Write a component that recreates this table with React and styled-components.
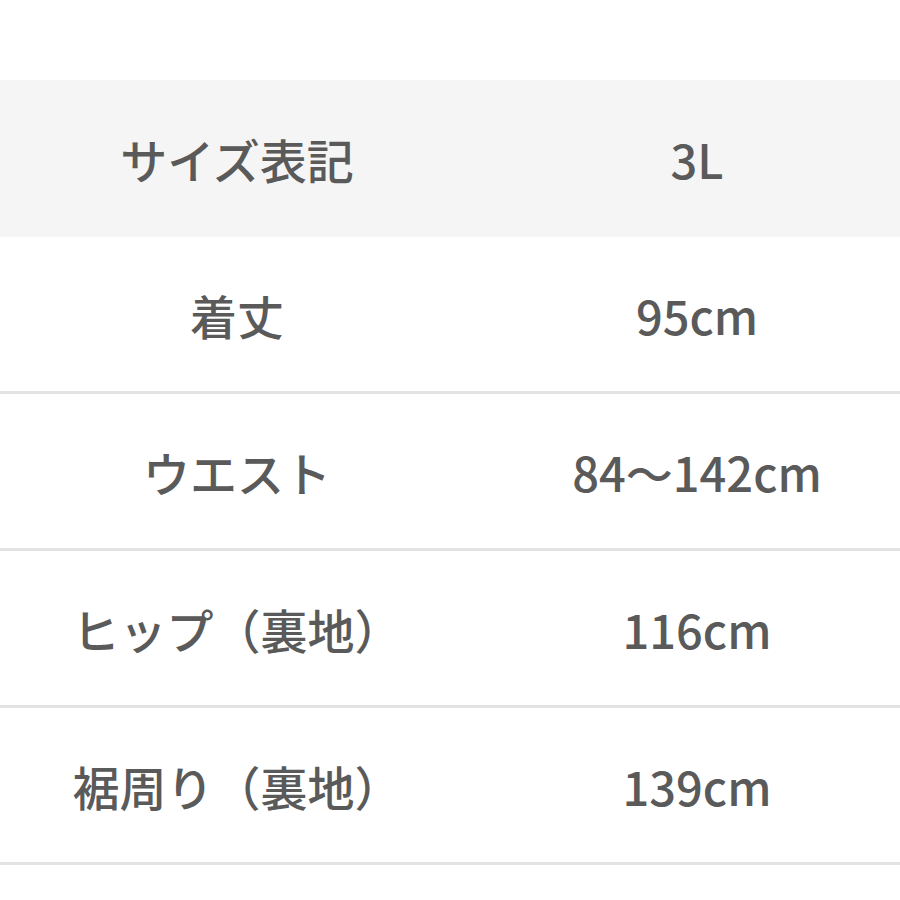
import React from 'react'
import styled, { createGlobalStyle } from 'styled-components'

const rows = [
    ['着丈', '95cm'],
    ['ウエスト', '84〜142cm'],
    ['ヒップ（裏地）', '116cm'],
    ['裾周り（裏地）', '139cm'],
]

function App() {
    return (
        <>
            <Global />
            <Page>
                <Table>
                    <Row head>
                        <Cell>サイズ表記</Cell>
                        <Cell>3L</Cell>
                    </Row>
                    {rows.map(([label, value]) =>
                        <Row key={label}>
                            <Cell>{label}</Cell>
                            <Cell>{value}</Cell>
                        </Row>
                    )}
                </Table>
            </Page>
        </>
    )
}

const Global = createGlobalStyle`
    html, body {
        margin: 0;
        padding: 0;
        background: #ffffff;
        overflow: hidden;
    }
`;

const Page = styled.div`
    width: 900px;
    height: 900px;
    overflow: hidden;
    padding-top: 80px;
    box-sizing: border-box;
`;

const Table = styled.div`
    width: 920px;
    display: flex;
    flex-direction: column;
`;

const Row = styled.div`
    display: grid;
    grid-template-columns: 474px 446px;
    height: ${props => props.head ? '157px' : '154px'};
    background-color: ${props => props.head ? '#f5f5f5' : '#ffffff'};
    border-bottom: ${props => props.head ? 'none' : '3px solid #e3e3e3'};
`;

const Cell = styled.div`
    display: flex;
    align-items: center;
    justify-content: center;
    font-family: "Noto Sans CJK JP", "Noto Sans", sans-serif;
    font-size: 47px;
    font-weight: 500;
    color: #5a5a5a;
    white-space: nowrap;
`;

export default App
